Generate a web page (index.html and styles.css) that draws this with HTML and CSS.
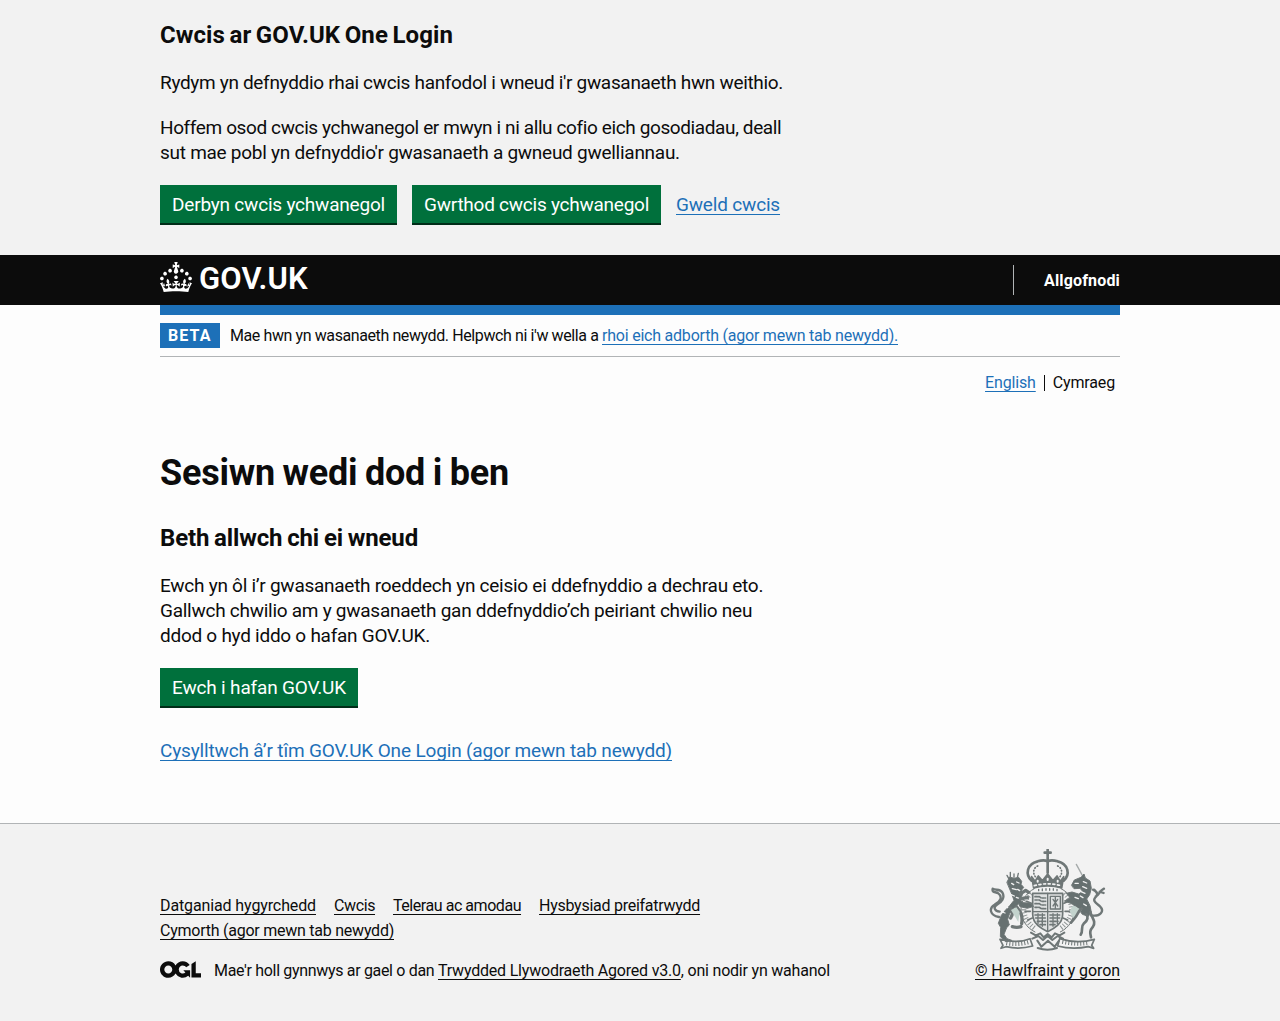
FILE: index.html
```
<!DOCTYPE html>
<html lang="cy">
<head>
<meta charset="utf-8">
<title>Sesiwn wedi dod i ben - GOV.UK One Login</title>
<link rel="stylesheet" href="styles.css">
</head>
<body>
<section class="cookie-banner">
  <div class="container">
    <h2 class="heading-m heading-cookies">Cwcis ar GOV.UK One Login</h2>
    <p class="body-text tight">Rydym yn defnyddio rhai cwcis hanfodol i wneud i'r gwasanaeth hwn weithio.</p>
    <p class="body-text"><span class="tighter">Hoffem osod cwcis ychwanegol er mwyn i ni allu cofio eich gosodiadau, deall</span><br>sut mae pobl yn defnyddio'r gwasanaeth a gwneud gwelliannau.</p>
    <div class="button-group">
      <button class="button accept">Derbyn cwcis ychwanegol</button>
      <button class="button reject">Gwrthod cwcis ychwanegol</button>
      <a class="link" href="#">Gweld cwcis</a>
    </div>
  </div>
</section>
<header class="header">
  <div class="container header-row">
    <a class="brand" href="#">
      <svg class="crown" viewBox="0 0 32 30" width="32" height="30" fill="currentColor" aria-hidden="true"><path d="M22.6 10.4c-1 .4-2-.1-2.4-1-.4-.9.1-2 1-2.4.9-.4 2 .1 2.4 1s-.1 2-1 2.4m-5.9 6.7c-.9.4-2-.1-2.4-1-.4-.9.1-2 1-2.4.9-.4 2 .1 2.4 1s-.1 2-1 2.4m10.8-3.7c-1 .4-2-.1-2.4-1-.4-.9.1-2 1-2.4.9-.4 2 .1 2.4 1s0 2-1 2.4m3.3 4.8c-1 .4-2-.1-2.4-1-.4-.9.1-2 1-2.4.9-.4 2 .1 2.4 1s-.1 2-1 2.4M17 4.7l2.3 1.2V2.5l-2.3.7-.2-.2.9-3h-3.4l.9 3-.2.2c-.1.1-2.3-.7-2.3-.7v3.4L15 4.7c.1.1.1.2.2.2l-1.3 4c-.1.2-.1.4-.1.6 0 1.1.8 2 1.9 2.2h.7c1-.2 1.9-1.1 1.9-2.1 0-.2 0-.4-.1-.6l-1.3-4c-.1-.2 0-.2.1-.3m-7.6 5.7c.9.4 2-.1 2.4-1 .4-.9-.1-2-1-2.4-.9-.4-2 .1-2.4 1s0 2 1 2.4m-5 3c.9.4 2-.1 2.4-1 .4-.9-.1-2-1-2.4-.9-.4-2 .1-2.4 1s.1 2 1 2.4m-3.2 4.8c.9.4 2-.1 2.4-1 .4-.9-.1-2-1-2.4-.9-.4-2 .1-2.4 1s0 2 1 2.4m14.8 11c4.4 0 8.6.3 12.3.8 1.1-4.5 2.4-7 3.7-8.8l-2.5-.9c.2 1.3.3 1.9 0 2.7-.4-.4-.8-1.1-1.1-2.3l-1.2 4c.7-.5 1.3-.8 2-.9-1.1 2.5-2.6 3.1-3.5 3-1.1-.2-1.7-1.2-1.5-2.1.3-1.2 1.5-1.5 2.1-.1 1.1-2.3-.8-3-2-2.3 1.9-1.9 2.1-3.5.6-5.6-2.1 1.6-2.1 3.2-1.2 5.5-1.2-1.4-3.2-.6-2.5 1.6.9-1.4 2.1-.5 1.9.8-.2 1.1-1.7 2.1-3.5 1.9-2.7-.2-2.9-2.1-2.9-3.6.7-.1 1.9.5 2.9 1.9l.4-4.3c-1.1 1.1-2.1 1.4-3.2 1.4.4-1.2 2.1-3 2.1-3h-5.4s1.7 1.9 2.1 3c-1.1 0-2.1-.2-3.2-1.4l.4 4.3c1-1.4 2.2-2 2.9-1.9-.1 1.5-.2 3.4-2.9 3.6-1.9.2-3.4-.8-3.5-1.9-.2-1.3 1-2.2 1.9-.8.7-2.3-1.2-3-2.5-1.6.9-2.2.9-3.9-1.2-5.5-1.5 2-1.3 3.7.6 5.6-1.2-.7-3.1 0-2 2.3.6-1.4 1.8-1.1 2.1.1.2.9-.3 1.9-1.5 2.1-.9.2-2.4-.5-3.5-3 .6 0 1.2.3 2 .9l-1.2-4c-.3 1.1-.7 1.9-1.1 2.3-.3-.8-.2-1.4 0-2.7l-2.9.9C1.3 23 2.6 25.5 3.7 30c3.7-.5 7.9-.8 12.3-.8"/></svg>
      <span class="brand-name">GOV.UK</span>
    </a>
    <nav class="account"><a href="#">Allgofnodi</a></nav>
  </div>
</header>
<div class="container">
  <div class="header-bar"></div>
  <div class="phase-banner">
    <strong class="tag">BETA</strong>
    <p class="phase-text"><span class="phase-intro">Mae hwn yn wasanaeth newydd. Helpwch ni i'w wella a </span><a class="link" href="#">rhoi eich adborth (agor mewn tab newydd).</a></p>
  </div>
  <nav class="languages"><a class="link" href="#">English</a><span class="current">Cymraeg</span></nav>
  <main class="main">
    <h1 class="heading-l">Sesiwn wedi dod i ben</h1>
    <h2 class="heading-m">Beth allwch chi ei wneud</h2>
    <p class="body-text">Ewch yn ôl i’r gwasanaeth roeddech yn ceisio ei ddefnyddio a dechrau eto.<br>Gallwch chwilio am y gwasanaeth gan ddefnyddio’ch peiriant chwilio neu<br>ddod o hyd iddo o hafan GOV.UK.</p>
    <a class="button home" href="#">Ewch i hafan GOV.UK</a>
    <p class="body-text contact"><a class="link" href="#">Cysylltwch â’r tîm GOV.UK One Login (agor mewn tab newydd)</a></p>
  </main>
</div>
<footer class="footer">
  <div class="container footer-row">
    <div class="footer-meta">
      <ul class="footer-links">
        <li><a class="l-access" href="#">Datganiad hygyrchedd</a></li>
        <li><a class="l-cookies" href="#">Cwcis</a></li>
        <li><a class="l-terms" href="#">Telerau ac amodau</a></li>
        <li><a class="l-privacy" href="#">Hysbysiad preifatrwydd</a></li>
        <li><a class="l-support" href="#">Cymorth (agor mewn tab newydd)</a></li>
      </ul>
      <div class="licence">
        <svg class="ogl" viewBox="0 0 483.2 195.7" width="41" height="17" fill="currentColor" aria-hidden="true"><path d="M421.5 142.8V.1l-50.7 32.3v161.1h112.4v-50.7zm-122.3-9.6A47.12 47.12 0 0 1 221 97.8c0-26 21.1-47.1 47.1-47.1 16.7 0 31.4 8.7 39.7 21.8l42.7-27.2A97.63 97.63 0 0 0 268.1 0c-36.5 0-68.3 20.1-85.1 49.7A98 98 0 0 0 97.8 0C43.9 0 0 43.9 0 97.8s43.9 97.8 97.8 97.8c36.5 0 68.3-20.1 85.1-49.7a97.76 97.76 0 0 0 149.6 25.4l19.4 22.2h3v-87.8h-80l24.3 27.5zM97.8 145c-26 0-47.1-21.1-47.1-47.1s21.1-47.1 47.1-47.1 47.1 21.1 47.1 47.1S123.8 145 97.8 145"/></svg>
        <span class="licence-text"><span class="licence-intro">Mae'r holl gynnwys ar gael o dan </span><a href="#">Trwydded Llywodraeth Agored v3.0</a>, oni nodir yn wahanol</span>
      </div>
    </div>
    <div class="copyright">
      <svg class="arms" viewBox="60 39 351 306" width="117" height="102" fill="none" stroke="#6f7777" stroke-width="5" stroke-linecap="round" stroke-linejoin="round" aria-hidden="true">
        <!-- crown -->
        <path d="M236 41v19M227 50h18M236 62v48" stroke-width="8"/>
        <path d="M188 134c-20-18-15-50 18-58 14-4 24-3 30 0 6-3 16-4 30 0 33 8 38 40 18 58" stroke-width="8"/>
        <path d="M199 122c-10-14-4-30 12-34M273 122c10-14 4-30-12-34" stroke-width="5" stroke-dasharray="2 7"/>
        <path d="M188 122l10 14 10-16 12 14 16-20 16 20 12-14 10 16 10-14-6 34q-42-12-84 0z" fill="#6f7777"/>
        <path d="M196 149q40-11 80 0" stroke="#f2f2f2" stroke-width="5" stroke-dasharray="6 8"/>
        <path d="M206 134v3M236 128v4M266 134v3" stroke="#f2f2f2" stroke-width="6"/>
        <!-- garter and shield -->
        <path d="M196 158c-56 28-52 104 2 130M276 158c56 28 52 104-2 130" stroke-width="3"/>
        <path d="M186 172c-32 30-28 76 10 104M286 172c32 30 28 76-10 104" stroke="#8c9393" stroke-width="15" stroke-dasharray="3 6" stroke-linecap="butt"/>
        <path d="M173 196l14 6M168 226h16M176 252l14-6M299 196l-14 6M304 226h-16M296 252l-14-6" stroke-width="5"/>
        <path d="M191 172h90v62c0 30-26 44-45 53-19-9-45-23-45-53z" fill="#dfe1e1" stroke-width="5"/>
        <path d="M236 172v112M191 227h90" stroke-width="4"/>
        <path d="M198 182h13l6 4h13M198 192h13l6 4h13M198 203h13l6 4h13M198 214h13l6 4h13M198 237h32M200 246h30M205 256h25M213 266h16M243 237h32M243 246h30M243 256h24M243 266h15" stroke-width="5" stroke-dasharray="7 4"/>
        <path d="M244 181h30v38h-30zM252 190l14 20M266 190l-14 20M259 184v31M209 164v-4M220 164v-5M231 163v-5M242 163v-5M253 163v-5M264 164v-4M207 233v32M220 233v38M252 233v38M265 233v30" stroke-width="4"/>
        <!-- lion -->
        <path d="M114 138l8-15 13 4 14-3 9 12-2 9 8 9-6 8 2 15-8 12 10 11 20 1 12 10-19 6-22-5-4-9-13 13-14 16-6 18 5 17-8 8-8 20 9 13 14 5-18 4-16-15 1-28-7-12 9-24 12-15 14-15 12-15-6-17z" fill="#667070" stroke-width="3"/>
        <path d="M114 118l5 9M124 109v14M135 114v10M148 112l-3 13" stroke-width="4"/>
        <path d="M128 142l6 4M143 138l7 3M130 158l12 3M146 160l6 4M126 176l10 4M142 184l8 3M110 210l6 5M100 228l8 3" stroke="#f2f2f2" stroke-width="4"/>
        <path d="M125 216c9 11 6 20 0 30M142 212c14 17 20 28 16 51M130 272q14 4 26 0M154 174l16-11 9 6M154 188l22-3" stroke-width="10"/>
        <path d="M126 222l22 36 4-30-10-14z" fill="#c3d3cd" stroke="none"/>
        <path d="M90 243c-28-5-31-27-13-37 18-9 24-24 11-34-8-6-20 0-17-14 8 6 22 0 29 11 9 16-2 30-17 38-10 6-8 18 9 20" stroke-width="7"/>
        <!-- unicorn -->
        <path d="M342 122l-20-37" stroke="#a4a9a9" stroke-width="4"/>
        <path d="M308 147l8-15 20-8 9-10 4 12 14 9 4 22-5 19-9 13 10 20 4 20-9 12-18-6-16-22-18-11-20-7 18-9-12-14 17-4 20 6 12-8-8-9-17 1z" fill="#667070" stroke-width="3"/>
        <path d="M318 142h10M343 137l10 4M341 152l12 5M336 167l12 5M334 180l8 5M318 184l10 4M344 204l8 5" stroke="#f2f2f2" stroke-width="4"/>
        <path d="M312 208l26 14-24 28-12-24z" fill="#c3d3cd" stroke="none"/>
        <path d="M338 218c-12 8-10 16-22 30l-10 12M352 235c8 11 4 19-8 28-10 9 0 20-9 33M364 228c5 20 18 28 8 44-12 14-8 20-6 32" stroke-width="8"/>
        <path d="M366 238c29 5 41-13 27-27-13-11-24-17-13-28 9-7 3-17-8-22M380 181c12-3 9-16 25-23M384 170l-8-9M392 167l12 4" stroke-width="7"/>
        <!-- motto scroll -->
        <path d="M93 310c30 8 65 8 90-2l8 22c-28 8-55 8-80 2l-15 5 6-9zM376 310c-35 10-67 10-104-2l-6 22c30 8 63 8 92 2l16 5-6-9z" stroke-width="5"/>
        <path d="M112 321q36 7 70-4M280 317q39 9 76 4" stroke-width="13" stroke-dasharray="3 6" stroke-linecap="butt"/>
        <path d="M186 290l14 8 14-6 10 12 12-10 12 10 10-12 14 6 14-8M190 308l18-8 14 12 14-12 14 12 16-12 16 8M205 314l12 18 20-18 20 18 13-18M206 336q30 10 58 0" stroke-width="6"/>
      </svg>
      <a href="#">© Hawlfraint y goron</a>
    </div>
  </div>
</footer>
</body>
</html>
```
FILE: styles.css
```
* { box-sizing: border-box; }
body { margin: 0; background: #fdfdfd; color: #0c0c0c; font-family: Roboto, "Liberation Sans", Arial, sans-serif; font-size: 19px; line-height: 25px; }
h1, h2, p, ul { margin: 0; padding: 0; }
.container { width: 960px; margin: 0 auto; }
a { color: inherit; text-decoration: underline; text-decoration-thickness: 1px; text-underline-offset: 3px; text-decoration-skip-ink: none; }
.link { color: #1d70b8; }
.heading-m { font-size: 24px; line-height: 30px; font-weight: 700; margin-bottom: 20px; letter-spacing: -.142px; word-spacing: -1px; }
.heading-cookies { letter-spacing: .087px; word-spacing: -1.5px; }
.heading-l { font-size: 36px; line-height: 40px; font-weight: 700; margin-bottom: 30px; letter-spacing: -.237px; word-spacing: -1px; }
.body-text { margin-bottom: 20px; letter-spacing: -.265px; white-space: nowrap; }
.tight { letter-spacing: -.32px; }
.tighter { letter-spacing: -.385px; }

.cookie-banner { background: #f2f2f2; height: 255px; padding-top: 20px; }
.button-group { display: flex; align-items: flex-start; gap: 15px; letter-spacing: -.176px; }
.button-group .link { margin-top: 7px; }
.button { display: block; height: 38px; padding: 0 12px; margin: 0 0 2px; border: 0; background: #00703c; box-shadow: 0 2px 0 #002d18; color: #fff; font: inherit; line-height: 39px; text-decoration: none; white-space: nowrap; letter-spacing: -.176px; }
.accept { width: 237px; letter-spacing: -.202px; }
.reject { width: 249px; letter-spacing: -.248px; }

.header { background: #0c0c0c; color: #fff; height: 50px; }
.header-row { display: flex; justify-content: space-between; align-items: center; height: 50px; }
.brand { display: flex; gap: 7px; text-decoration: none; align-items: center; padding-bottom: 6px; }
.crown { display: block; }
.brand-name { font-size: 31px; line-height: 30px; font-weight: 600; padding-top: 4px; letter-spacing: .15px; }
.account { height: 30px; padding-left: 30px; border-left: 1px solid #b1b4b6; font-size: 16px; line-height: 31px; font-weight: 700; letter-spacing: .164px; }
.account a { text-decoration: none; }
.header-bar { height: 10px; background: #1d70b8; }

.phase-banner { display: flex; gap: 10px; height: 42px; padding-top: 8px; border-bottom: 1px solid #b1b4b6; font-size: 16px; line-height: 26px; }
.tag { width: 60px; height: 25px; padding-left: 8px; background: #1d70b8; color: #fff; letter-spacing: 1.1px; }
.phase-text { letter-spacing: -.219px; white-space: nowrap; }
.phase-intro { letter-spacing: -.403px; }
.languages { display: flex; justify-content: flex-end; align-items: center; height: 16px; margin-top: 18px; padding-right: 5px; font-size: 16px; line-height: 16px; letter-spacing: -.15px; }
.languages .current { margin-left: 8px; padding-left: 8px; border-left: 1px solid #0c0c0c; }

.main { padding-top: 62px; height: 432px; }
.home { width: 198px; margin-bottom: 32px; }
.contact { letter-spacing: -.157px; }

.footer { height: 198px; background: #f2f2f2; border-top: 1px solid #b1b4b6; font-size: 16px; white-space: nowrap; }
.footer-row { display: flex; justify-content: space-between; align-items: flex-end; height: 159px; }
.footer-links { display: flex; flex-wrap: wrap; column-gap: 18px; width: 560px; list-style: none; margin-bottom: 15px; }
.l-access { letter-spacing: -.119px; }
.l-cookies { letter-spacing: -.392px; }
.l-terms { letter-spacing: -.452px; }
.l-privacy { letter-spacing: -.263px; }
.l-support { letter-spacing: -.244px; }
.licence { display: flex; gap: 13px; }
.ogl { display: block; margin-top: 3px; }
.licence-text { letter-spacing: -.205px; }
.licence-intro { letter-spacing: -.325px; }
.copyright { display: flex; flex-direction: column; align-items: center; gap: 7px; letter-spacing: -.087px; }
.arms { display: block; }
```
